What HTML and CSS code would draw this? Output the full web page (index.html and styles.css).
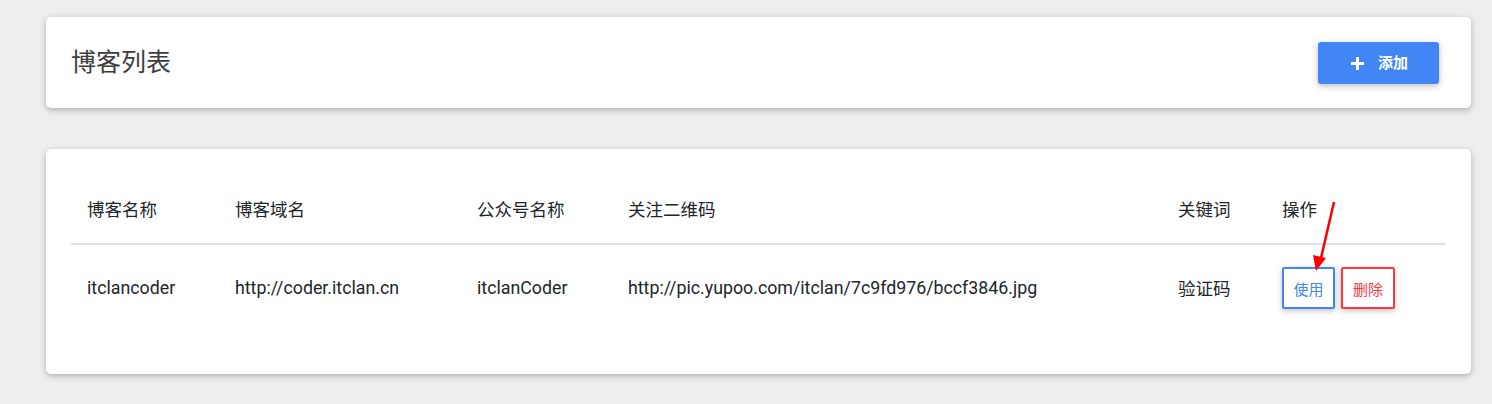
FILE: index.html
```html
<!DOCTYPE html>
<html lang="zh-CN">
<head>
<meta charset="utf-8">
<title>博客列表</title>
<link rel="stylesheet" href="styles.css">
</head>
<body>
<div class="page">
  <div class="card header-card">
    <h1 class="title">博客列表</h1>
    <button class="btn-add">
      <svg class="plus" width="13" height="13" viewBox="0 0 13 13"><path d="M5 0h3v5h5v3H8v5H5V8H0V5h5z" fill="#fff"/></svg>
      <span>添加</span>
    </button>
  </div>
  <div class="card table-card">
    <table class="blog-table">
      <colgroup>
        <col class="c1"><col class="c2"><col class="c3"><col class="c4"><col class="c5"><col class="c6">
      </colgroup>
      <thead>
        <tr>
          <th>博客名称</th>
          <th>博客域名</th>
          <th>公众号名称</th>
          <th>关注二维码</th>
          <th>关键词</th>
          <th>操作</th>
        </tr>
      </thead>
      <tbody>
        <tr>
          <td>itclancoder</td>
          <td>http://coder.itclan.cn</td>
          <td>itclanCoder</td>
          <td>http://pic.yupoo.com/itclan/7c9fd976/bccf3846.jpg</td>
          <td class="cjk">验证码</td>
          <td>
            <div class="actions">
              <button class="btn-outline btn-use">使用</button>
              <button class="btn-outline btn-del">删除</button>
            </div>
          </td>
        </tr>
      </tbody>
    </table>
  </div>
</div>
<svg class="arrow" width="40" height="90" viewBox="0 0 40 90">
  <line x1="34" y1="2" x2="21" y2="58" stroke="#ff0000" stroke-width="2.5"/>
  <polygon points="16,71 13,55 26,58" fill="#ff0000"/>
</svg>
</body>
</html>
```
FILE: styles.css
```css
html, body {
  margin: 0;
  padding: 0;
  background: #eeeeee;
}
body {
  font-family: Roboto, "Noto Sans CJK SC", sans-serif;
  color: #212529;
}
.page {
  padding: 17px 21px 30px 46px;
  display: flex;
  flex-direction: column;
  gap: 41px;
}
.card {
  background: #fff;
  border-radius: 5px;
  box-shadow: 0 2px 5px 0 rgba(0,0,0,0.16), 0 2px 10px 0 rgba(0,0,0,0.12);
}
.header-card {
  height: 91px;
  box-sizing: border-box;
  display: flex;
  align-items: center;
  justify-content: space-between;
  padding: 0 32px 0 25px;
}
.title {
  margin: 0 0 5px 0;
  font-family: "Noto Sans CJK SC", sans-serif;
  font-weight: 400;
  font-size: 25px;
  color: #3d3d3d;
}
.btn-add {
  width: 121px;
  height: 42px;
  margin-top: 1px;
  border: none;
  border-radius: 3px;
  background: #4285f4;
  color: #fff;
  display: flex;
  align-items: center;
  justify-content: center;
  gap: 14px;
  font-family: "Noto Sans CJK SC", sans-serif;
  font-weight: 700;
  font-size: 15px;
  box-shadow: 0 2px 5px 0 rgba(0,0,0,0.16), 0 2px 10px 0 rgba(0,0,0,0.12);
  padding: 0 0 3px 2px;
}
.plus {
  margin-top: 3px;
}
.table-card {
  height: 225px;
  box-sizing: border-box;
  padding: 26px 25px 0 25px;
}
.blog-table {
  width: 100%;
  border-collapse: collapse;
  table-layout: fixed;
}
.c1 { width: 148px; }
.c2 { width: 242px; }
.c3 { width: 151px; }
.c4 { width: 550px; }
.c5 { width: 104px; }
.c6 { width: 180px; }
.blog-table th {
  text-align: left;
  font-family: "Noto Sans CJK SC", sans-serif;
  font-weight: 400;
  font-size: 17.5px;
  height: 66px;
  padding: 0 16px 2px 16px;
  vertical-align: middle;
  border-bottom: 2px solid #dee2e6;
}
.blog-table td {
  font-size: 17.8px;
  height: 84px;
  padding: 0 16px 4px 16px;
  vertical-align: middle;
  white-space: nowrap;
}
.blog-table td.cjk {
  font-family: "Noto Sans CJK SC", sans-serif;
  font-size: 17.5px;
}
.actions {
  display: flex;
  gap: 6px;
  padding-top: 2px;
}
.btn-outline {
  height: 42px;
  width: 54px;
  background: #fff;
  border-radius: 2px;
  border: 2px solid;
  font-family: "Noto Sans CJK SC", sans-serif;
  font-size: 15px;
  padding: 0;
  box-shadow: 0 2px 5px 0 rgba(0,0,0,0.14), 0 2px 10px 0 rgba(0,0,0,0.10);
}
.btn-use {
  width: 53px;
  border-color: #4285f4;
  color: #4285f4;
}
.btn-del {
  border-color: #ff3547;
  color: #ff3547;
}
.arrow {
  position: absolute;
  left: 1300px;
  top: 200px;
}
```
